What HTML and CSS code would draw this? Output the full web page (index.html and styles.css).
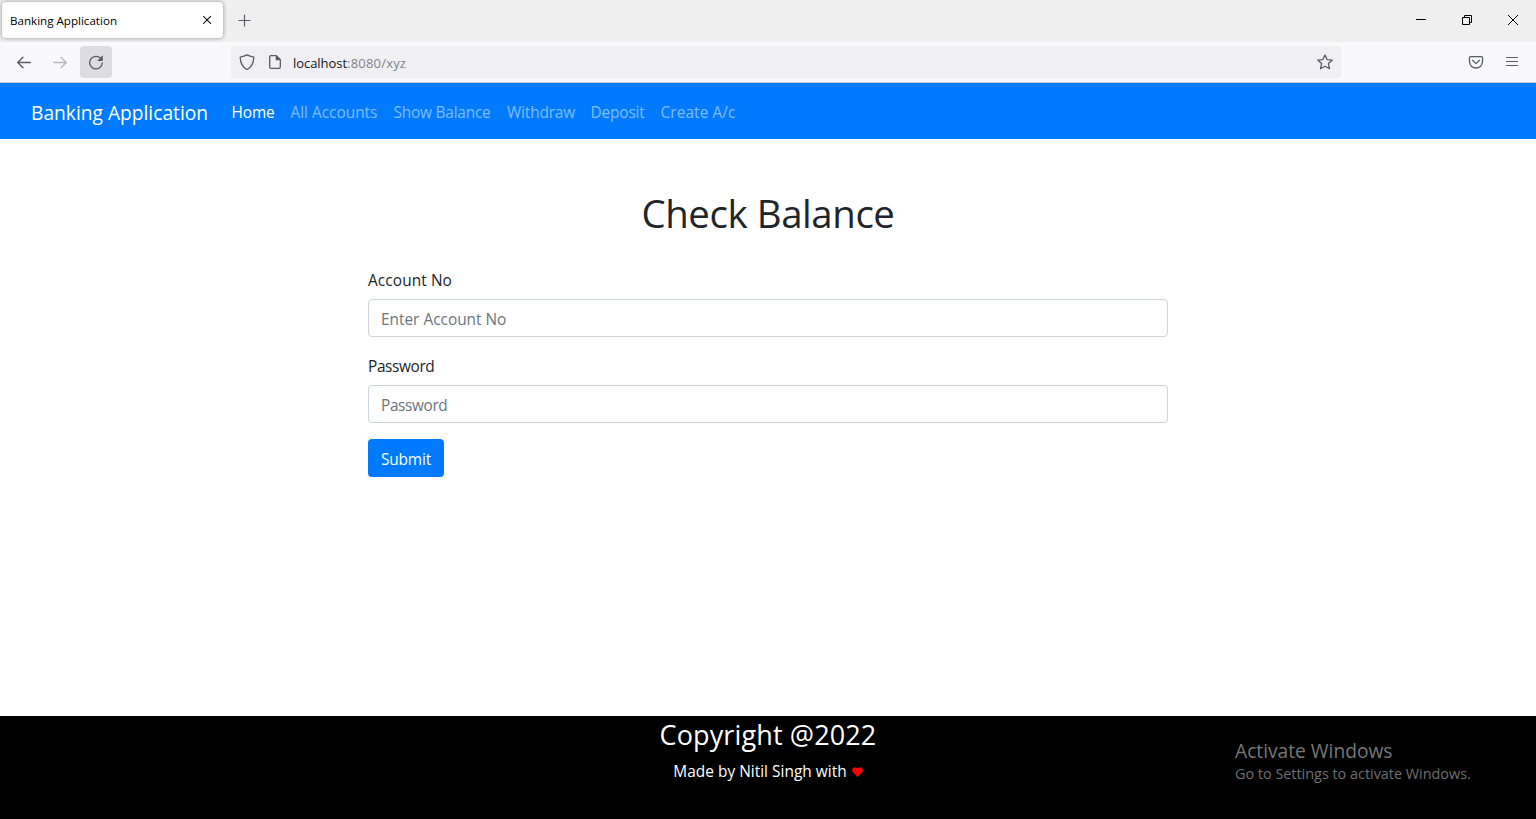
FILE: index.html
```html
<!DOCTYPE html>
<html lang="en">
<head>
<meta charset="utf-8">
<title>Banking Application</title>
<link rel="stylesheet" href="styles.css">
</head>
<body>
<div class="window">
  <div class="tabbar">
    <div class="tab">
      <span class="tab-title">Banking Application</span>
      <svg class="tab-close" width="16" height="16" viewBox="0 0 16 16"><path d="M4.600 4.400l7 7M11.600 4.400l-7 7"/></svg>
    </div>
    <svg class="new-tab" width="16" height="16" viewBox="0 0 16 16"><path d="M8.500 3v11M3 8.500h11"/></svg>
    <div class="window-buttons">
      <svg width="46" height="40" viewBox="0 0 46 40"><path d="M18 19.500h10"/></svg>
      <svg width="46" height="40" viewBox="0 0 46 40"><path d="M18.500 17.500h7v7h-7zM20.500 17.500v-2h7v7h-2"/></svg>
      <svg width="46" height="40" viewBox="0 0 46 40"><path d="M18 15l10 10M28 15l-10 10"/></svg>
    </div>
  </div>
  <div class="toolbar">
    <div class="tool"><svg width="16" height="16" viewBox="0 0 16 16"><path d="M14.400 8.500H1.800M7 3.200L1.700 8.500 7 13.800"/></svg></div>
    <div class="tool disabled"><svg width="16" height="16" viewBox="0 0 16 16"><path d="M1.600 8.500h12.600M9 3.200l5.300 5.300L9 13.800"/></svg></div>
    <div class="tool hover"><svg width="16" height="16" viewBox="0 0 16 16"><path d="M12.700 4.400A6.300 6.300 0 1 0 14.300 8.800"/><path class="solid" d="M14.800 2.100v4.500c0 .3-.2.4-.4.4H9.900c-.4 0-.5-.4-.3-.6l4.600-4.600c.2-.2.6-.1.6.3z"/></svg></div>
    <div class="urlbar">
      <svg width="16" height="16" viewBox="0 0 16 16"><path d="M8 .9c2 1.100 4 1.700 6.200 1.900.4 0 .7.4.6.8-.3 5.100-2 9.200-6.200 11.700-.4.2-.8.2-1.200 0C3.200 12.800 1.500 8.700 1.200 3.600c0-.4.2-.8.600-.8C4 2.600 6 2 8 .9z"/></svg>
      <svg class="page-icon" width="16" height="16" viewBox="0 0 16 16"><path d="M9.300 1.700H4a1.300 1.300 0 0 0-1.300 1.300v10A1.300 1.300 0 0 0 4 14.300h8a1.300 1.300 0 0 0 1.300-1.300V5.700z"/><path class="solid" d="M8.700 1.500v4.800h4.900V5.500l-4-4z"/></svg>
      <span class="url"><span class="host">localhost</span><span class="path">:8080/xyz</span></span>
      <svg class="star" width="16" height="16" viewBox="0 0 16 16"><path d="M8 1l2.100 4.600 5.100.6-3.800 3.400 1.100 5.100L8 12.200l-4.500 2.500 1.100-5.100L.8 6.200l5.100-.6z"/></svg>
    </div>
    <svg class="pocket" width="16" height="16" viewBox="0 0 16 16"><path d="M2.500 2.600h11a1 1 0 0 1 1 1v4.200a6.500 6.200 0 0 1-13 0V3.600a1 1 0 0 1 1-1z"/><path d="M4.700 6.500L8 9.600l3.300-3.100"/></svg>
    <svg class="menu" width="16" height="16" viewBox="0 0 16 16"><path d="M2.500 3.500h11M2.500 7.500h11M2.500 11.500h11"/></svg>
  </div>
  <nav class="navbar">
    <a class="brand">Banking Application</a>
    <a class="link home">Home</a>
    <a class="link accounts">All Accounts</a>
    <a class="link balance">Show Balance</a>
    <a class="link withdraw">Withdraw</a>
    <a class="link deposit">Deposit</a>
    <a class="link create">Create A/c</a>
  </nav>
  <main class="content">
    <h1>Check Balance</h1>
    <form class="form">
      <label class="label">Account No</label>
      <div class="field">Enter Account No</div>
      <label class="label password">Password</label>
      <div class="field password">Password</div>
      <button class="submit" type="button">Submit</button>
    </form>
  </main>
  <footer class="footer">
    <h3>Copyright @2022</h3>
    <p class="credit">Made by Nitil Singh with <svg width="11" height="11" viewBox="0 0 11 11"><path d="M5.500 10L1 5.300C-.3 3.800.1 1 1.900.6c1.500-.4 2.900 0 3.600 1.200C6.200.6 7.600.2 9.100.6c1.800.4 2.200 3.200.9 4.700z"/></svg></p>
    <div class="activation">
      <div class="activation-title">Activate Windows</div>
      <div class="activation-text">Go to Settings to activate Windows.</div>
    </div>
  </footer>
</div>
</body>
</html>
```
FILE: styles.css
```css
* { box-sizing: border-box; }
body { margin: 0; font-family: "Open Sans", "Noto Sans", sans-serif; font-size: 15.4px; line-height: 24px; color: #212529; background: #fff; overflow: hidden; }
svg { display: block; flex: none; fill: none; stroke: #5b5b66; stroke-width: 1.3; stroke-linejoin: round; stroke-linecap: round; }
svg .solid { fill: #5b5b66; stroke: none; }
.window { display: flex; flex-direction: column; height: 819px; }

.tabbar { display: flex; align-items: flex-start; height: 42px; background: #efefef; }
.tab { display: flex; align-items: center; justify-content: space-between; width: 221px; height: 36px; margin: 2px 0 0 2px; padding: 0 8px; background: #fff; border-radius: 4px; box-shadow: 0 0 4px rgba(0, 0, 0, 0.4); }
.tab-title { padding-top: 1px; font-size: 11.6px; color: #000; }
.tab-close { stroke: #15141a; stroke-width: 1.1; }
.new-tab { margin: 12px 0 0 13px; stroke-width: 1.2; }
.window-buttons { display: flex; margin-left: auto; }
.window-buttons svg { stroke: #000; stroke-width: 1; stroke-linecap: butt; stroke-linejoin: miter; }

.toolbar { display: flex; align-items: center; height: 41px; padding: 0 16px 1px 8px; background: #f9f9fb; border-bottom: 1px solid #cccccf; }
.tool { display: flex; align-items: center; justify-content: center; width: 32px; height: 32px; margin-right: 4px; border-radius: 4px; }
.disabled { opacity: 0.4; }
.hover { background: #dcdce2; }
.urlbar { display: flex; align-items: center; width: 1110px; height: 32px; margin-left: 115px; padding: 0 8px; background: #f0f0f4; border-radius: 4px; }
.page-icon { margin-left: 12px; }
.url { margin: 2px 0 0 10px; font-size: 13px; }
.host { color: #15141a; letter-spacing: -0.05px; }
.path { color: #83838b; letter-spacing: 0.2px; }
.star { margin-left: auto; }
.pocket { margin-left: 127px; }
.menu { margin-left: 20px; stroke-width: 1.2; }

.navbar { display: flex; align-items: center; height: 56px; padding-left: 31px; background: #007bff; color: rgba(255, 255, 255, 0.5); }
.brand { width: 200.5px; padding-top: 3px; font-size: 19.2px; color: #fff; }
.link { padding-top: 3px; }
.home { width: 59px; color: #fff; letter-spacing: -0.1px; }
.accounts { width: 103px; }
.balance { width: 113.5px; letter-spacing: -0.2px; }
.withdraw { width: 83.5px; letter-spacing: -0.15px; }
.deposit { width: 70px; letter-spacing: -0.15px; }
.create { letter-spacing: 0.1px; }

.content { flex: 1; padding-top: 50px; }
h1 { margin: 0; height: 48px; line-height: 48px; font-size: 38.4px; font-weight: 400; letter-spacing: -0.42px; text-align: center; }
.form { display: flex; flex-direction: column; align-items: flex-start; width: 800px; margin: 30px auto 0; }
.label { height: 24px; margin-bottom: 8px; padding-top: 2px; letter-spacing: 0.1px; }
.password { letter-spacing: -0.38px; }
.field { width: 100%; height: 38px; margin-bottom: 16px; padding: 8px 12px 4px; border: 1px solid #ced4da; border-radius: 4px; color: #6c757d; }
.submit { width: 76px; height: 38px; padding: 3px 0 0; border: 0; border-radius: 4px; background: #007bff; color: #fff; font: inherit; letter-spacing: -0.15px; }

.footer { position: relative; height: 103px; background: #000; color: #fff; text-align: center; }
h3 { margin: 0; height: 34px; padding-top: 2px; line-height: 34px; font-size: 27px; font-weight: 400; letter-spacing: 0.13px; }
.credit { display: flex; align-items: center; justify-content: center; gap: 5px; margin: 10px 0 0; letter-spacing: 0.03px; }
.credit svg { fill: #f00; stroke: none; }
.activation { position: absolute; left: 1235px; top: 22px; text-align: left; color: #777; }
.activation-title { height: 25px; line-height: 26px; font-size: 19.2px; }
.activation-text { line-height: 22px; font-size: 14.4px; color: #6f6f6f; }
```
